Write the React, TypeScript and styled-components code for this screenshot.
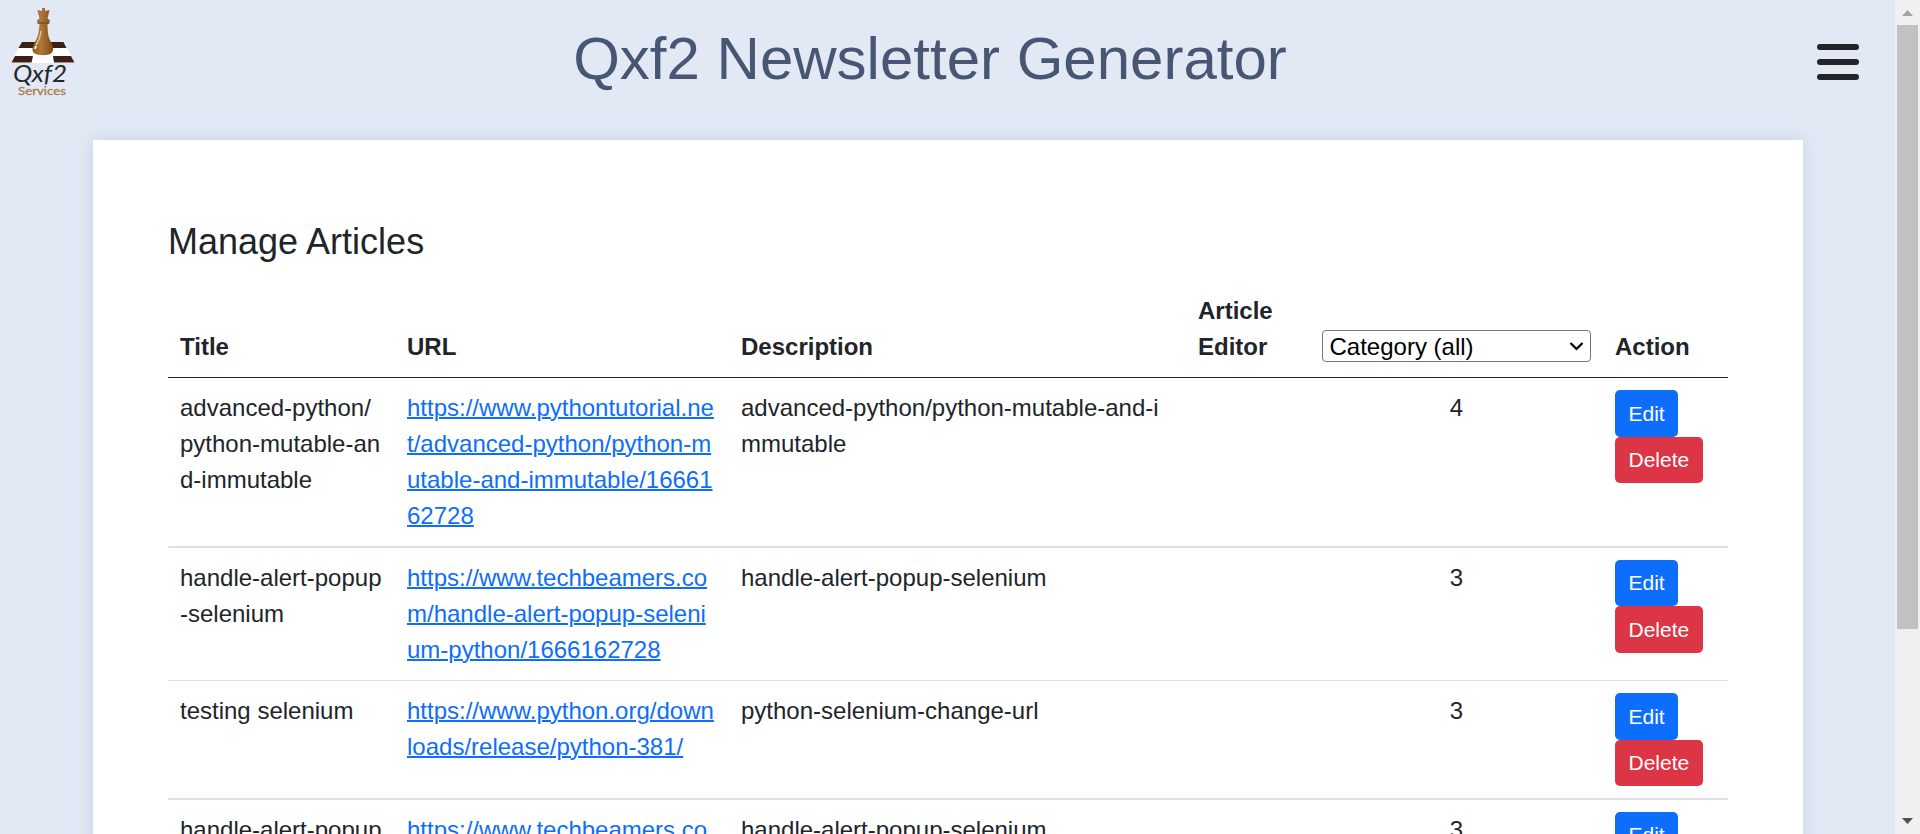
import React from 'react';
import styled, { createGlobalStyle } from 'styled-components';

const GlobalStyle = createGlobalStyle`
  *, *::before, *::after { box-sizing: border-box; }
  html, body { margin: 0; padding: 0; overflow: hidden; }
  body {
    background: #e2e9f5;
    color: #212529;
    font-family: "Liberation Sans", Arial, sans-serif;
    font-size: 24px;
    line-height: 36px;
  }
`;

const Screen = styled.div`
  display: flex;
  height: 834px;
  overflow: hidden;
`;

const Page = styled.div`
  flex: 1;
  min-width: 0;
  display: flex;
  flex-direction: column;
  overflow: hidden;
`;

const Header = styled.header`
  display: flex;
  flex: none;
  justify-content: space-between;
  height: 140px;
  padding-right: 36px;
`;

const Logo = styled.svg`
  width: 90px;
  height: 110px;
`;

const PageTitle = styled.h1`
  margin: 23px 47px 0 0;
  color: #475672;
  font-size: 60px;
  font-weight: 400;
  line-height: 72px;
  white-space: nowrap;
`;

const MenuButton = styled.button`
  display: flex;
  flex-direction: column;
  gap: 9px;
  width: 42px;
  margin: 44px 0 0;
  padding: 0;
  border: 0;
  background: none;
  align-self: flex-start;
`;

const MenuBar = styled.span`
  height: 6px;
  border-radius: 3px;
  background: #212529;
`;

const Card = styled.main`
  flex: none;
  width: 1710px;
  margin-left: 93px;
  padding: 80px 75px;
  background: #fff;
  box-shadow: 0 0 15px rgba(70, 110, 180, 0.18);
`;

const CardTitle = styled.h4`
  margin: 0 0 18px;
  font-size: 36px;
  font-weight: 400;
  line-height: 43px;
`;

const Table = styled.table`
  width: 1560px;
  table-layout: fixed;
  border-collapse: separate;
  border-spacing: 0;
  word-break: break-all;
`;

const Col = styled.col<{ $width: number }>`
  width: ${(p) => p.$width}px;
`;

const HeadCell = styled.th`
  padding: 12px;
  border-bottom: 1px solid #212529;
  text-align: left;
  vertical-align: bottom;
  font-weight: 700;
  word-break: normal;
`;

const FilterCell = styled(HeadCell)`
  padding: 12px 12px 15px;
  line-height: 0;
`;

const CategorySelect = styled.select`
  width: 269px;
  height: 32px;
  padding: 0 2px 0 6.5px;
  border: 1px solid #767676;
  border-radius: 4px;
  background: #fff;
  color: #000;
  font: 24px "Liberation Sans", Arial, sans-serif;
  appearance: none;
`;

const SelectWrap = styled.div`
  position: relative;
  width: 269px;
`;

const Chevron = styled.svg`
  position: absolute;
  right: 7px;
  top: 11px;
  width: 15px;
  height: 10px;
  pointer-events: none;
`;

const Cell = styled.td<{ $line: number; $center?: boolean }>`
  padding: 12px;
  border-bottom: ${(p) => p.$line}px solid #dee2e6;
  vertical-align: top;
  text-align: ${(p) => (p.$center ? 'center' : 'left')};
`;

const ArticleLink = styled.a`
  color: #0d6efd;
  text-decoration: underline;
  text-decoration-thickness: 2px;
`;

const Actions = styled.div`
  display: flex;
  flex-direction: column;
  align-items: flex-start;
`;

const ActionButton = styled.button<{ $height: number; $danger?: boolean }>`
  height: ${(p) => p.$height}px;
  padding: 0 13.5px ${(p) => (p.$height === 46 ? 2 : 0)}px;
  border: 0;
  border-radius: 5px;
  background: ${(p) => (p.$danger ? '#dc3545' : '#0d6efd')};
  color: #fff;
  font: 21px/31px "Liberation Sans", Arial, sans-serif;
`;

const ScrollTrack = styled.div`
  display: flex;
  flex: none;
  flex-direction: column;
  align-items: center;
  width: 25px;
  background: #f0f0f0;
`;

const ScrollArrow = styled.svg`
  flex: none;
  width: 25px;
  height: 25px;
`;

const ScrollThumb = styled.div`
  width: 21px;
  height: 604px;
  margin-bottom: auto;
  background: #c1c1c1;
`;

interface Article {
  title: string;
  url: string;
  description: string;
  category: number;
  line: number;
  editHeight: number;
}

const articles: Article[] = [
  {
    title: 'advanced-python/python-mutable-and-immutable',
    url: 'https://www.pythontutorial.net/advanced-python/python-mutable-and-immutable/1666162728',
    description: 'advanced-python/python-mutable-and-immutable',
    category: 4,
    line: 2,
    editHeight: 47,
  },
  {
    title: 'handle-alert-popup-selenium',
    url: 'https://www.techbeamers.com/handle-alert-popup-selenium-python/1666162728',
    description: 'handle-alert-popup-selenium',
    category: 3,
    line: 1,
    editHeight: 46,
  },
  {
    title: 'testing selenium',
    url: 'https://www.python.org/downloads/release/python-381/',
    description: 'python-selenium-change-url',
    category: 3,
    line: 2,
    editHeight: 47,
  },
  {
    title: 'handle-alert-popup-selenium',
    url: 'https://www.techbeamers.com/handle-alert-popup-selenium-python/1666162728',
    description: 'handle-alert-popup-selenium',
    category: 3,
    line: 1,
    editHeight: 46,
  },
];

const columnWidths = [227, 334, 457, 124, 293, 125];

const CompanyLogo = () => (
  <Logo viewBox="0 0 90 110" aria-label="Qxf2 Services">
    <defs>
      <linearGradient id="wood" x1="0" x2="1" y1="0" y2="0">
        <stop offset="0" stopColor="#8a5a1c" />
        <stop offset="0.4" stopColor="#b0793a" />
        <stop offset="1" stopColor="#7a4a14" />
      </linearGradient>
    </defs>
    <path d="M22 42H64L75 63H11Z" fill="#fff" />
    <path d="M22 42H38L37 48H18.500Z" fill="#3d2015" />
    <path d="M48 42H63.500L66.500 48H50Z" fill="#3d2015" />
    <path d="M15 56H33L31.500 62.500H11.500Z" fill="#3d2015" />
    <path d="M53 56H71L74.500 62.500H54Z" fill="#3d2015" />
    <path
      d="M42 8H45V11L49.500 10 47.500 18.500 50 20.500 49 24H47.500C47.500 33 48.500 38 51 42 53.500 46 54 51 51.500 53 48 56 38 56 34 53 31.500 51 32.500 46 35 42 38 37 39 32 39.500 24H37.500L37 20.500 39.500 18.500 37.500 10 42 11Z"
      fill="url(#wood)"
    />
    <path d="M38.500 23H48.500" stroke="#6b3d10" strokeWidth="1" />
    <path d="M41 31Q40 39 36 45" stroke="#e5c391" strokeWidth="1.600" fill="none" />
    <path d="M36 46L35 49" stroke="#fff" strokeWidth="1.800" />
    <text x="13" y="82" fontFamily="Lato" fontStyle="italic" fontWeight="400" fontSize="23" textLength="54" lengthAdjust="spacingAndGlyphs" fill="#24282d">
      Qxf2
    </text>
    <text x="18" y="94.500" fontFamily="Lato" fontSize="12" textLength="48" lengthAdjust="spacingAndGlyphs" fill="#ad7a49" stroke="#ad7a49" strokeWidth="0.300">
      Services
    </text>
  </Logo>
);

export default function App() {
  return (
    <Screen>
      <GlobalStyle />
      <Page>
        <Header>
          <CompanyLogo />
          <PageTitle>Qxf2 Newsletter Generator</PageTitle>
          <MenuButton aria-label="Menu">
            <MenuBar />
            <MenuBar />
            <MenuBar />
          </MenuButton>
        </Header>
        <Card>
          <CardTitle>Manage Articles</CardTitle>
          <Table>
            <colgroup>
              {columnWidths.map((w, i) => (
                <Col key={i} $width={w} />
              ))}
            </colgroup>
            <thead>
              <tr>
                <HeadCell>Title</HeadCell>
                <HeadCell>URL</HeadCell>
                <HeadCell>Description</HeadCell>
                <HeadCell>Article Editor</HeadCell>
                <FilterCell>
                  <SelectWrap>
                    <CategorySelect defaultValue="all">
                      <option value="all">Category (all)</option>
                    </CategorySelect>
                    <Chevron viewBox="0 0 15 10">
                      <path d="M1.500 2L7.500 8 13.500 2" fill="none" stroke="#000" strokeWidth="2.200" />
                    </Chevron>
                  </SelectWrap>
                </FilterCell>
                <HeadCell>Action</HeadCell>
              </tr>
            </thead>
            <tbody>
              {articles.map((a, i) => (
                <tr key={i}>
                  <Cell $line={a.line}>{a.title}</Cell>
                  <Cell $line={a.line}>
                    <ArticleLink href="#">{a.url}</ArticleLink>
                  </Cell>
                  <Cell $line={a.line}>{a.description}</Cell>
                  <Cell $line={a.line} />
                  <Cell $line={a.line} $center>
                    {a.category}
                  </Cell>
                  <Cell $line={a.line}>
                    <Actions>
                      <ActionButton $height={a.editHeight}>Edit</ActionButton>
                      <ActionButton $height={93 - a.editHeight} $danger>
                        Delete
                      </ActionButton>
                    </Actions>
                  </Cell>
                </tr>
              ))}
            </tbody>
          </Table>
        </Card>
      </Page>
      <ScrollTrack>
        <ScrollArrow viewBox="0 0 25 25">
          <path d="M7 16L12.500 10 18 16Z" fill="#a3a3a3" />
        </ScrollArrow>
        <ScrollThumb />
        <ScrollArrow viewBox="0 0 25 25">
          <path d="M7 9L12.500 15 18 9Z" fill="#505050" />
        </ScrollArrow>
      </ScrollTrack>
    </Screen>
  );
}
